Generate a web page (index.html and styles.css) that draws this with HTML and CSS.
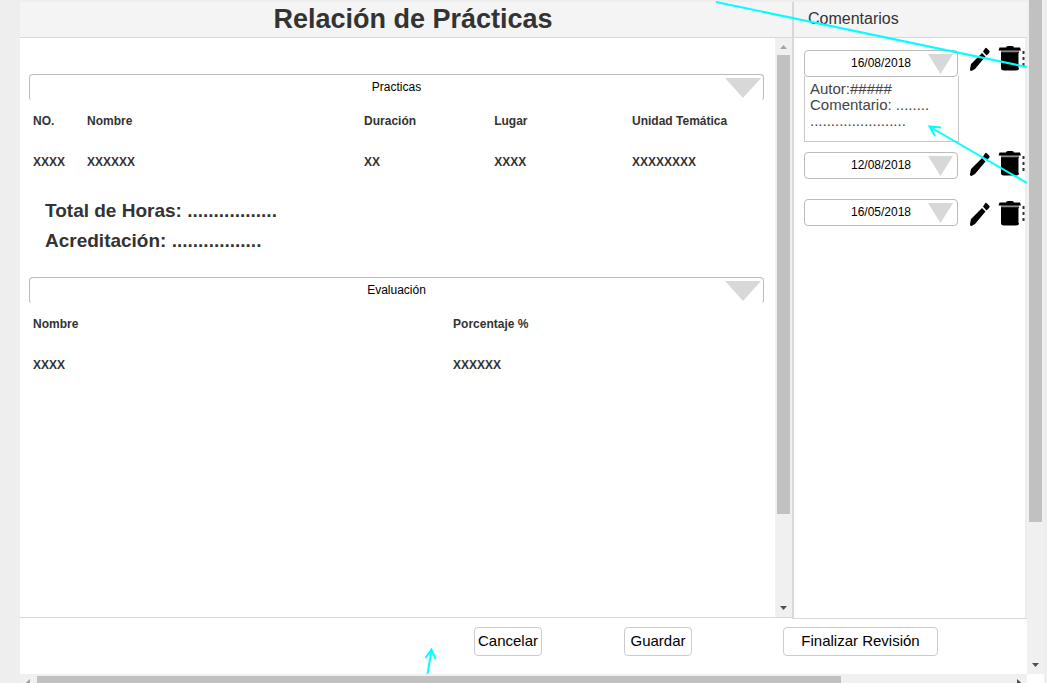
FILE: index.html
```html
<!DOCTYPE html>
<html lang="es">
<head>
<meta charset="utf-8">
<title>Relación de Prácticas</title>
<link rel="stylesheet" href="styles.css">
</head>
<body>
<svg class="symbols" aria-hidden="true">
  <symbol id="pencil" viewBox="0 0 24 28">
    <path d="M2 24l1-5L14 8l3.500 3.500L7 24l-3.500 2q-2 0-1.500-2z"/>
    <path d="M15 6.500l2-3q1-1.500 2 0l2 2q1.500 1 0 2.500l-2.500 2.500z"/>
  </symbol>
  <symbol id="trash" viewBox="0 0 28 28">
    <path d="M8 2.500q0-1.500 2-1.500h4q2 0 2 1.500h6l1 3H.5l1-3z"/>
    <path d="M3 5.500h18v17.500q0 2.500-3 2.500H6q-3 0-3-2.500z"/>
    <path d="M3 6.500h18" stroke="#888" stroke-width="1.500"/>
    <path d="M20.500 8v15" stroke="#888" stroke-width="1"/>
    <path d="M24.500 6h2v3h-2zM24.500 12h2v3h-2zM24.500 18h2v3h-2z" fill="#333"/>
  </symbol>
</svg>
<div class="frame">
  <div class="content">
    <main class="main">
      <header class="bar bar-title"><h1 class="title">Relación de Prácticas</h1></header>
      <div class="scroll-row">
        <div class="sheet">
          <section class="section">
            <button class="toggle toggle-wide" type="button" aria-expanded="true">Practicas<span class="tri"></span></button>
            <table class="table">
              <colgroup><col class="c-no"><col class="c-name"><col class="c-time"><col class="c-place"><col></colgroup>
              <thead><tr><th>NO.</th><th>Nombre</th><th>Duración</th><th>Lugar</th><th>Unidad Temática</th></tr></thead>
              <tbody><tr><td>XXXX</td><td>XXXXXX</td><td>XX</td><td>XXXX</td><td>XXXXXXXX</td></tr></tbody>
            </table>
            <div class="totals">
              <p>Total de Horas: .................</p>
              <p>Acreditación: .................</p>
            </div>
          </section>
          <section class="section">
            <button class="toggle toggle-wide" type="button" aria-expanded="true">Evaluación<span class="tri"></span></button>
            <table class="table">
              <colgroup><col class="c-half"><col></colgroup>
              <thead><tr><th>Nombre</th><th>Porcentaje %</th></tr></thead>
              <tbody><tr><td>XXXX</td><td>XXXXXX</td></tr></tbody>
            </table>
          </section>
        </div>
        <div class="vscroll">
          <span class="arrow arrow-up"></span>
          <span class="thumb"></span>
          <span class="arrow arrow-down"></span>
        </div>
      </div>
    </main>
    <aside class="comments">
      <header class="bar"><h2 class="subtitle">Comentarios</h2></header>
      <div class="comment-list">
        <article class="comment comment-open">
          <div class="comment-body">
            <button class="toggle" type="button" aria-expanded="true">16/08/2018<span class="tri"></span></button>
            <p class="note">Autor:#####<br>Comentario: ........<br>.......................</p>
          </div>
          <div class="actions">
            <button class="icon" type="button" aria-label="Editar"><svg class="pencil"><use href="#pencil"/></svg></button>
            <button class="icon" type="button" aria-label="Eliminar"><svg class="trash"><use href="#trash"/></svg></button>
          </div>
        </article>
        <article class="comment">
          <div class="comment-body"><button class="toggle" type="button" aria-expanded="false">12/08/2018<span class="tri"></span></button></div>
          <div class="actions">
            <button class="icon" type="button" aria-label="Editar"><svg class="pencil"><use href="#pencil"/></svg></button>
            <button class="icon" type="button" aria-label="Eliminar"><svg class="trash"><use href="#trash"/></svg></button>
          </div>
        </article>
        <article class="comment">
          <div class="comment-body"><button class="toggle" type="button" aria-expanded="false">16/05/2018<span class="tri"></span></button></div>
          <div class="actions actions-low">
            <button class="icon" type="button" aria-label="Editar"><svg class="pencil"><use href="#pencil"/></svg></button>
            <button class="icon" type="button" aria-label="Eliminar"><svg class="trash"><use href="#trash"/></svg></button>
          </div>
        </article>
      </div>
    </aside>
    <footer class="footer">
      <button class="btn" type="button">Cancelar</button>
      <button class="btn" type="button">Guardar</button>
      <button class="btn btn-wide" type="button">Finalizar Revisión</button>
    </footer>
    <svg class="pointers" aria-hidden="true">
      <path d="M696 2L1007 67M1007 183L910 127M921 127.500L909.500 126.500L915 136M407.500 674L411.500 650M405.500 658L411.500 649.500L415.500 659"/>
    </svg>
  </div>
  <div class="vscroll vscroll-page">
    <span class="thumb"></span>
    <span class="arrow arrow-down"></span>
  </div>
  <div class="hscroll">
    <span class="arrow arrow-left"></span>
    <span class="hthumb"></span>
    <span class="arrow arrow-right"></span>
  </div>
  <div class="corner"></div>
</div>
</body>
</html>
```
FILE: styles.css
```css
* { box-sizing: border-box; }
body {
  margin: 0;
  overflow: hidden;
  background: #eee;
  color: #333;
  font-family: "Liberation Sans", Arial, sans-serif;
}
h1, h2, p { margin: 0; }
button { font-family: inherit; color: #000; cursor: pointer; }
.symbols { position: absolute; width: 0; height: 0; }

.frame {
  display: grid;
  grid-template-columns: 1fr 17px;
  grid-template-rows: 1fr 9px;
  height: 100vh;
  padding: 0 3px 0 20px;
}
.content {
  position: relative;
  display: grid;
  grid-template-columns: 1fr 235px;
  grid-template-rows: 1fr 56px;
  min-height: 0;
  padding-top: 2px;
  background: linear-gradient(#eee 2px, #fff 2px);
}
.main { display: flex; flex-direction: column; border-bottom: 1px solid #d8d8d8; }
.bar {
  display: flex;
  align-items: center;
  height: 36px;
  padding-bottom: 2px;
  background: #f4f4f4;
  border-bottom: 1px solid #d8d8d8;
}
.bar-title { justify-content: center; padding-left: 14px; }
.title { font-size: 27px; line-height: 32px; }
.subtitle { padding-left: 14px; font-size: 16px; font-weight: 400; }

.scroll-row { display: flex; flex: 1; }
.sheet {
  display: flex;
  flex: 1;
  flex-direction: column;
  gap: 21px;
  padding: 36px 11px 0 9px;
}
.toggle {
  position: relative;
  display: block;
  width: 100%;
  height: 27px;
  padding: 0 0 2px;
  background: #fff;
  border: 1px solid #bbb;
  border-radius: 4px;
  font-size: 12px;
}
.toggle-wide { border-bottom-color: transparent; }
.tri {
  position: absolute;
  top: 3px;
  right: 4px;
  width: 25px;
  height: 20px;
  background: #d8d8d8;
  clip-path: polygon(0 0, 100% 0, 50% 100%);
}
.toggle-wide .tri { right: 2px; width: 36px; }

.table { width: 100%; table-layout: fixed; border-collapse: collapse; font-size: 12px; font-weight: 700; }
.table th, .table td { height: 41px; padding: 0 4px 2px; text-align: left; }
.c-no { width: 7.35%; }
.c-name { width: 37.7%; }
.c-time { width: 17.7%; }
.c-place { width: 18.75%; }
.c-half { width: 57.15%; }
.totals { padding: 13px 0 0 16px; font-size: 19px; font-weight: 700; line-height: 30px; }

.vscroll {
  display: flex;
  flex-direction: column;
  align-items: center;
  width: 17px;
  padding: 7px 0;
  background: #f0f0f0;
}
.thumb { width: 13px; height: 459px; margin-top: 6px; background: #c1c1c1; }
.vscroll-page { padding-top: 0; }
.vscroll-page .thumb { height: 522px; margin-top: 0; }
.arrow { width: 7px; height: 4px; background: #505050; }
.arrow-up { background: #a3a3a3; clip-path: polygon(50% 0, 100% 100%, 0 100%); }
.arrow-down { margin-top: auto; clip-path: polygon(0 0, 100% 0, 50% 100%); }
.hscroll {
  display: flex;
  gap: 7px;
  padding: 2px 6px 0 6px;
  overflow: hidden;
  background: #f0f0f0;
}
.hthumb { width: 80.8%; background: #c1c1c1; }
.arrow-left, .arrow-right { flex: none; width: 4px; height: 7px; margin-top: 3px; }
.arrow-left { background: #a3a3a3; clip-path: polygon(100% 0, 100% 100%, 0 50%); }
.arrow-right { margin-left: auto; clip-path: polygon(0 0, 100% 50%, 0 100%); }
.corner { background: #fff; }

.comments {
  display: flex;
  flex-direction: column;
  margin-bottom: -1px;
  border-left: 2px solid #d8d8d8;
  border-bottom: 1px solid #d8d8d8;
}
.comment-list {
  display: flex;
  flex: 1;
  flex-direction: column;
  gap: 20px;
  padding: 12px 0 0 10px;
  border-right: 2px solid #eee;
}
.comment { display: flex; gap: 10px; }
.comment-open { margin-bottom: -10px; }
.comment-body { flex: none; width: 154px; }
.note {
  height: 66px;
  margin-right: -1px;
  margin-top: -1px;
  padding: 5px;
  border: 1px solid #c8c8c8;
  border-top: 0;
  color: #444;
  font-size: 15px;
  line-height: 16px;
}
.actions { display: flex; flex: none; gap: 6px; height: 28px; margin-top: -5px; }
.comment:nth-child(2) .actions { margin-top: -2px; }
.comment .actions-low { margin-top: 1px; }
.icon { padding: 0; background: none; border: 0; }
.pencil { display: block; width: 24px; height: 28px; }
.trash { display: block; width: 28px; height: 28px; }

.footer {
  display: flex;
  grid-column: 1 / -1;
  justify-content: flex-end;
  align-items: flex-start;
  padding: 9px 89px 0 0;
}
.btn {
  width: 68px;
  height: 29px;
  margin-left: 82px;
  padding: 0 0 2px;
  background: #fff;
  border: 1px solid #ccc;
  border-radius: 4px;
  font-size: 15px;
}
.btn-wide { width: 155px; margin-left: 91px; }
.pointers {
  position: absolute;
  inset: 0;
  width: 100%;
  height: 100%;
  pointer-events: none;
  fill: none;
  stroke: #0ff;
  stroke-width: 2;
}
```
